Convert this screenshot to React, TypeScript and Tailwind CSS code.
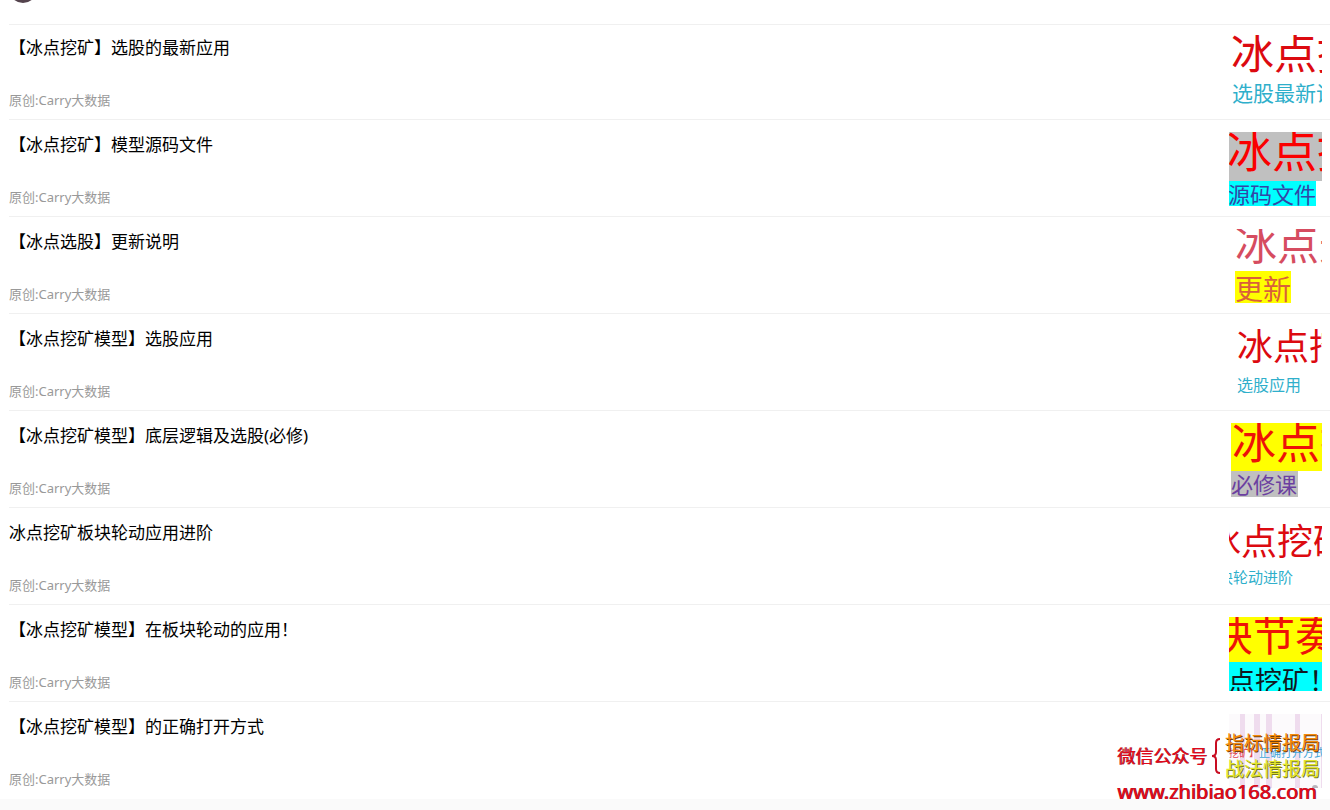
import type { ReactNode } from "react";

const RED = "#dc0a10";
const TEAL = "#2fafcb";

function Thumb({ label, children }: { label: string; children: ReactNode }) {
  return (
    <svg role="img" aria-label={label} viewBox="0 0 93 74" className="h-[74px] w-[93px] shrink-0 overflow-hidden">
      {children}
    </svg>
  );
}

const articles: { title: string; cover: ReactNode }[] = [
  {
    title: "【冰点挖矿】选股的最新应用",
    cover: (
      <>
        <text x="2" y="34" fontSize="43" fill={RED}>冰点挖矿</text>
        <text x="3" y="66" fontSize="21" fill={TEAL}>选股最新说明</text>
      </>
    ),
  },
  {
    title: "【冰点挖矿】模型源码文件",
    cover: (
      <>
        <rect width="93" height="49" fill="#c0c0c0" />
        <rect y="49" width="87" height="25" fill="#00ffff" />
        <text x="-2" y="36" fontSize="45" fill="#fa0000">冰点挖矿</text>
        <text x="-1" y="71" fontSize="22" fill="#3346a6">源码文件</text>
      </>
    ),
  },
  {
    title: "【冰点选股】更新说明",
    cover: (
      <>
        <text x="6" y="31" fontSize="42" fill="#d64c60">冰点选股</text>
        <rect x="6" y="42" width="56" height="32" fill="#ffff00" />
        <text x="6" y="71" fontSize="28" fill="#d9603a">更新</text>
      </>
    ),
  },
  {
    title: "【冰点挖矿模型】选股应用",
    cover: (
      <>
        <text x="8" y="34" fontSize="36" fill={RED}>冰点挖矿</text>
        <text x="8" y="65" fontSize="16" fill={TEAL}>选股应用</text>
      </>
    ),
  },
  {
    title: "【冰点挖矿模型】底层逻辑及选股(必修)",
    cover: (
      <>
        <rect x="2" width="91" height="48" fill="#ffff00" />
        <rect x="2" y="48" width="67" height="26" fill="#c0c0c0" />
        <text x="3" y="36" fontSize="44" fill="#ee1208">冰点挖矿</text>
        <text x="2" y="70" fontSize="22" fill="#6b3fa0">必修课</text>
      </>
    ),
  },
  {
    title: "冰点挖矿板块轮动应用进阶",
    cover: (
      <>
        <text x="-24" y="35" fontSize="36" fill={RED}>冰点挖矿</text>
        <text x="-11" y="63" fontSize="15" fill={TEAL}>块轮动进阶</text>
      </>
    ),
  },
  {
    title: "【冰点挖矿模型】在板块轮动的应用！",
    cover: (
      <>
        <rect width="93" height="45" fill="#ffff00" />
        <rect y="45" width="93" height="29" fill="#00ffff" />
        <text x="-18" y="34" fontSize="42" fill="#ee1208">块节奏</text>
        <text x="-1" y="74" fontSize="27" fill="#101820">点挖矿！</text>
      </>
    ),
  },
  {
    title: "【冰点挖矿模型】的正确打开方式",
    cover: (
      <>
        <rect width="93" height="74" fill="#fcfafc" />
        <g fill="#efdcee">
          <rect x="11" width="5" height="74" />
          <rect x="25" width="6" height="74" />
          <rect x="37" width="6" height="74" />
          <rect x="66" width="5" height="74" />
          <rect x="92" width="1" height="74" />
        </g>
        <circle cx="86" cy="74" r="3" fill="#b9b4bb" />
        <text x="0" y="43" fontSize="10" fill="#e0434f">挖矿】</text>
        <text x="30" y="43" fontSize="11" fill="#3fa5d8">正确打开方式</text>
      </>
    ),
  },
];

function Watermark() {
  return (
    <aside className="pointer-events-none absolute right-[10px] bottom-2 flex flex-col text-[#e0081c]">
      <div className="flex items-center justify-end gap-1">
        <span className="text-lg leading-6 [text-shadow:1px_0_0_#8a1420]">微信公众号</span>
        <svg viewBox="0 0 10 36" className="h-9 w-[10px]" fill="none" stroke="#c80d22" strokeWidth="2" aria-hidden="true">
          <path d="M9 1Q5 1 5 5V14Q5 18 1 18Q5 18 5 22V31Q5 35 9 35" />
        </svg>
        <div className="flex flex-col text-[19px] leading-[26px]">
          <span className="text-[#f58a0a] [text-shadow:1px_1px_0_#704010]">指标情报局</span>
          <span className="text-[#e2e62c] [text-shadow:1px_1px_0_#777a20]">战法情报局</span>
        </div>
      </div>
      <span className="text-xl leading-5 [text-shadow:1px_0_0_#8a1420]">www.zhibiao168.com</span>
    </aside>
  );
}

export default function App() {
  return (
    <div className="relative min-h-screen overflow-hidden bg-[#fafafa] font-['Noto_Sans','Noto_Sans_CJK_SC',sans-serif] text-black">
      <main className="bg-white pb-px pl-[9px]">
        <header className="h-[25px] border-b border-[#f0f0f0] pl-[5px]">
          <svg viewBox="0 0 18 3" className="h-[3px] w-[18px]" aria-hidden="true">
            <circle cx="9" cy="-11" r="14" fill="#54434d" />
          </svg>
        </header>
        <ul>
          {articles.map((a) => (
            <li key={a.title} className="border-b border-[#f0f0f0] pt-3 pr-2 pb-[10px] first:pt-[10px] last:border-b-0">
              <a href="#" className="flex justify-between">
                <div className="flex flex-col justify-between">
                  <h2 className="text-[17px] leading-[26px]">{a.title}</h2>
                  <p className="text-[13px] leading-[18px] text-[#999]">原创:Carry大数据</p>
                </div>
                <Thumb label={a.title}>{a.cover}</Thumb>
              </a>
            </li>
          ))}
        </ul>
      </main>
      <Watermark />
    </div>
  );
}
